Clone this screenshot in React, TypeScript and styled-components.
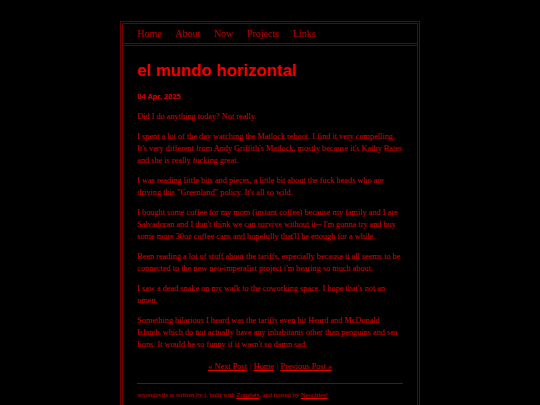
import React from 'react';
import styled, { createGlobalStyle } from 'styled-components';

const GlobalStyle = createGlobalStyle`
  html, body {
    margin: 0;
    padding: 0;
    background: #000;
  }
  body {
    font-family: "Liberation Serif", "Times New Roman", serif;
    color: #c00;
  }
`;

const navLinks = ['Home', 'About', 'Now', 'Projects', 'Links'];

const paragraphs = [
  'Did I do anything today? Not really.',
  "I spent a lot of the day watching the Matlock reboot. I find it very compelling. It's very different from Andy Griffith's Matlock, mostly because it's Kathy Bates and she is really fucking great.",
  'I was reading little bits and pieces, a little bit about the fuck heads who are driving this "Greenland" policy. It\'s all so wild.',
  "I bought some coffee for my mom (instant coffee) because my family and I are Salvadoran and I don't think we can survive without it-- I'm gonna try and buy some more 30oz coffee cans and hopefully that'll be enough for a while.",
  "Been reading a lot of stuff about the tariffs, especially because it all seems to be connected to the new neo-imperalist project i'm hearing so much about.",
  "I saw a dead snake on my walk to the coworking space. I hope that's not an omen.",
  "Something hilarious I heard was the tariffs even hit Heard and McDonald Islands which do not actually have any inhabitants other than penguins and sea lions. It would be so funny if it wasn't so damn sad.",
];

function App() {
  return (
    <Page>
      <GlobalStyle />
      <Container>
        <Nav>
          {navLinks.map((l) => (
            <NavLink key={l} href="#">{l}</NavLink>
          ))}
        </Nav>
        <Main>
          <Title>el mundo horizontal</Title>
          <PostDate>04 Apr, 2025</PostDate>
          {paragraphs.map((p, i) => (
            <Para key={i}>{p}</Para>
          ))}
          <PostNav>
            <PostLink href="#">« Next Post</PostLink>
            <Sep>|</Sep>
            <PostLink href="#">Home</PostLink>
            <Sep>|</Sep>
            <PostLink href="#">Previous Post »</PostLink>
          </PostNav>
          <Rule />
          <Footer>
            sevendevils is written by j, built with <FootLink href="#">Zonelets</FootLink>, and hosted by{' '}
            <FootLink href="#">Neocities!</FootLink>
          </Footer>
        </Main>
      </Container>
    </Page>
  );
}

const Page = styled.div`
  padding-top: 21px;
  min-height: 405px;
  box-sizing: border-box;
`;

const Container = styled.div`
  width: 300px;
  margin: 0 auto;
  box-sizing: border-box;
  border: 3px double #6a0000;
  border-bottom: none;
  min-height: 400px;
`;

const Nav = styled.nav`
  display: flex;
  align-items: center;
  gap: 13.6px;
  height: 19px;
  padding: 0 14px;
  border-bottom: 3px double #6a0000;
`;

const NavLink = styled.a`
  font-size: 10px;
  color: #b00;
  text-decoration: none;
`;

const Main = styled.main`
  padding: 0 14px 10px;
`;

const Title = styled.h1`
  font-family: "Liberation Sans", Arial, sans-serif;
  font-size: 16.8px;
  font-weight: bold;
  line-height: 20px;
  color: #e00;
  margin: 15px 0 10.5px;
`;

const PostDate = styled.div`
  font-family: "Liberation Sans", Arial, sans-serif;
  font-size: 7.5px;
  font-weight: bold;
  line-height: 9px;
  color: #d00;
  margin-bottom: 10px;
`;

const Para = styled.p`
  font-size: 8.26px;
  line-height: 12px;
  margin: 0 0 8px;
  color: #d00;
`;

const PostNav = styled.div`
  text-align: center;
  font-size: 8.3px;
  line-height: 12px;
  margin-top: 10px;
`;

const PostLink = styled.a`
  color: #d00;
  text-decoration: underline;
`;

const Sep = styled.span`
  color: #900;
  margin: 0 2.5px;
`;

const Rule = styled.hr`
  border: none;
  border-top: 1px solid #800;
  margin: 10px 0 6px;
`;

const Footer = styled.div`
  font-size: 6.6px;
  line-height: 9px;
  color: #c00;
`;

const FootLink = styled.a`
  color: #d00;
  text-decoration: underline;
`;

export default App;
